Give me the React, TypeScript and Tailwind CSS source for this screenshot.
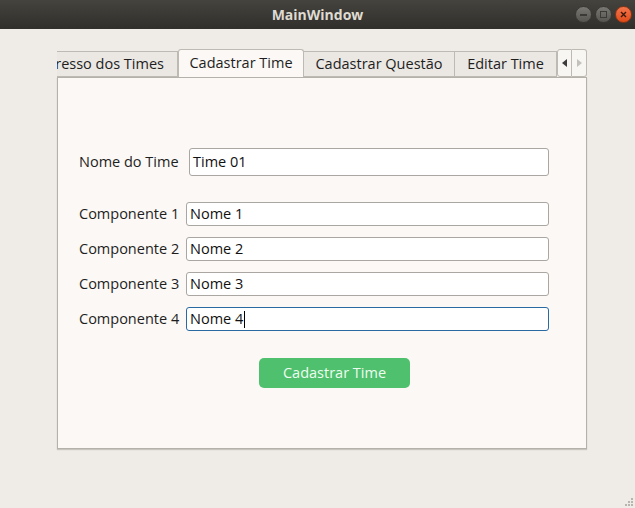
import React, { useState } from 'react';

const font = { fontFamily: '"Open Sans", "Noto Sans", sans-serif' };

function TitleBar() {
  return (
    <div className="relative h-[29px] bg-gradient-to-b from-[#45433e] to-[#302f2b] flex items-center justify-center">
      <span className="text-[14px] font-bold text-[#dfdbd2]">MainWindow</span>
      <div className="absolute right-[3px] top-[6px] flex gap-[3px]">
        <div className="w-[17px] h-[17px] rounded-full bg-gradient-to-b from-[#7a7873] to-[#57554f] border border-[#3a3935] flex items-center justify-center">
          <div className="w-[7px] h-[2px] bg-[#3b3a36]" />
        </div>
        <div className="w-[17px] h-[17px] rounded-full bg-gradient-to-b from-[#7a7873] to-[#57554f] border border-[#3a3935] flex items-center justify-center">
          <div className="w-[7px] h-[7px] border-[1.5px] border-[#3b3a36]" />
        </div>
        <div className="w-[17px] h-[17px] rounded-full bg-gradient-to-b from-[#f4754a] to-[#df4a16] border border-[#8c3414] flex items-center justify-center">
          <svg width="7" height="7" viewBox="0 0 7 7">
            <path d="M1 1L6 6M6 1L1 6" stroke="#3b1a0c" strokeWidth="1.4" />
          </svg>
        </div>
      </div>
    </div>
  );
}

function Tabs() {
  return (
    <div className="flex items-end h-[28px]">
      <div className="relative w-[500px] h-[28px] overflow-hidden flex items-end">
        <div className="w-[121px] h-[26px] shrink-0 bg-[#ebe7e3] border border-[#bdb9b3] border-l-0 flex items-center justify-end pr-[13px] text-[14.5px] text-[#1e1e1e] whitespace-nowrap overflow-hidden">
          resso dos Times
        </div>
        <div className="w-[126px] h-[29px] shrink-0 bg-[#fbf8f5] border border-[#bdb9b3] border-b-0 rounded-t-[3px] flex items-center justify-center pb-[2px] text-[14.5px] text-[#1e1e1e] -mb-[1px] z-10">
          Cadastrar Time
        </div>
        <div className="w-[151px] h-[26px] shrink-0 bg-[#ebe7e3] border border-[#bdb9b3] border-l-0 flex items-center justify-center text-[14.5px] text-[#1e1e1e]">
          Cadastrar Questão
        </div>
        <div className="w-[102px] h-[26px] shrink-0 bg-[#ebe7e3] border border-[#bdb9b3] border-l-0 flex items-center justify-center text-[14.5px] text-[#1e1e1e]">
          Editar Time
        </div>
      </div>
      <div className="flex h-[28px]">
        <div className="w-[15px] h-[28px] bg-[#f8f6f3] border border-[#bdb9b3] rounded-l-[3px] flex items-center justify-center">
          <svg width="5" height="8" viewBox="0 0 5 8"><path d="M5 0L0 4L5 8Z" fill="#3c3c3c" /></svg>
        </div>
        <div className="w-[15px] h-[28px] bg-[#f8f6f3] border border-l-0 border-[#bdb9b3] rounded-r-[3px] flex items-center justify-center">
          <svg width="5" height="8" viewBox="0 0 5 8"><path d="M0 0L5 4L0 8Z" fill="#c4c1bc" /></svg>
        </div>
      </div>
    </div>
  );
}

function Field({ label, value, focused, labelW, h }: { label: string; value: string; focused?: boolean; labelW: number; h: number }) {
  return (
    <div className="flex items-center">
      <div className="text-[14.5px] text-[#1e1e1e] shrink-0" style={{ width: labelW }}>{label}</div>
      <div
        className={`flex-1 flex items-center bg-white rounded-[3px] border px-[3px] text-[14.5px] text-[#111] ${focused ? 'border-[#2a6aa3]' : 'border-[#aaa7a2]'}`}
        style={{ height: h }}
      >
        {value}
        {focused && <span className="inline-block w-[1px] h-[17px] bg-black ml-[1px]" />}
      </div>
    </div>
  );
}

export default function App() {
  const [names] = useState(['Nome 1', 'Nome 2', 'Nome 3', 'Nome 4']);
  return (
    <div className="w-[635px] h-[508px] bg-[#efebe7] flex flex-col" style={font}>
      <TitleBar />
      <div className="relative flex-1 pt-[20px] pl-[57px]">
        <div className="w-[530px]">
          <Tabs />
          <div className="h-[372px] bg-[#fbf8f5] border border-[#b4b0aa] shadow-[0_1px_1px_#c8c4be] pt-[70px] pl-[21px] pr-[37px]">
            <Field label="Nome do Time" value="Time 01" labelW={110} h={28} />
            <div className="mt-[26px] flex flex-col gap-[11px]">
              {names.map((n, i) => (
                <Field key={i} label={`Componente ${i + 1}`} value={n} focused={i === 3} labelW={107} h={24} />
              ))}
            </div>
            <div className="mt-[27px] pl-[180px]">
              <button className="w-[151px] h-[30px] rounded-[5px] bg-[#4fc06d] text-[14.5px] text-[#eefcf0]">
                Cadastrar Time
              </button>
            </div>
          </div>
        </div>
        <div className="absolute right-[2px] bottom-[2px] grid grid-cols-3 gap-[1px]">
          {[0, 0, 1, 0, 1, 1, 1, 1, 1].map((v, i) => (
            <div key={i} className={`w-[2px] h-[2px] ${v ? 'bg-[#b8b4ae]' : ''}`} />
          ))}
        </div>
      </div>
    </div>
  );
}
